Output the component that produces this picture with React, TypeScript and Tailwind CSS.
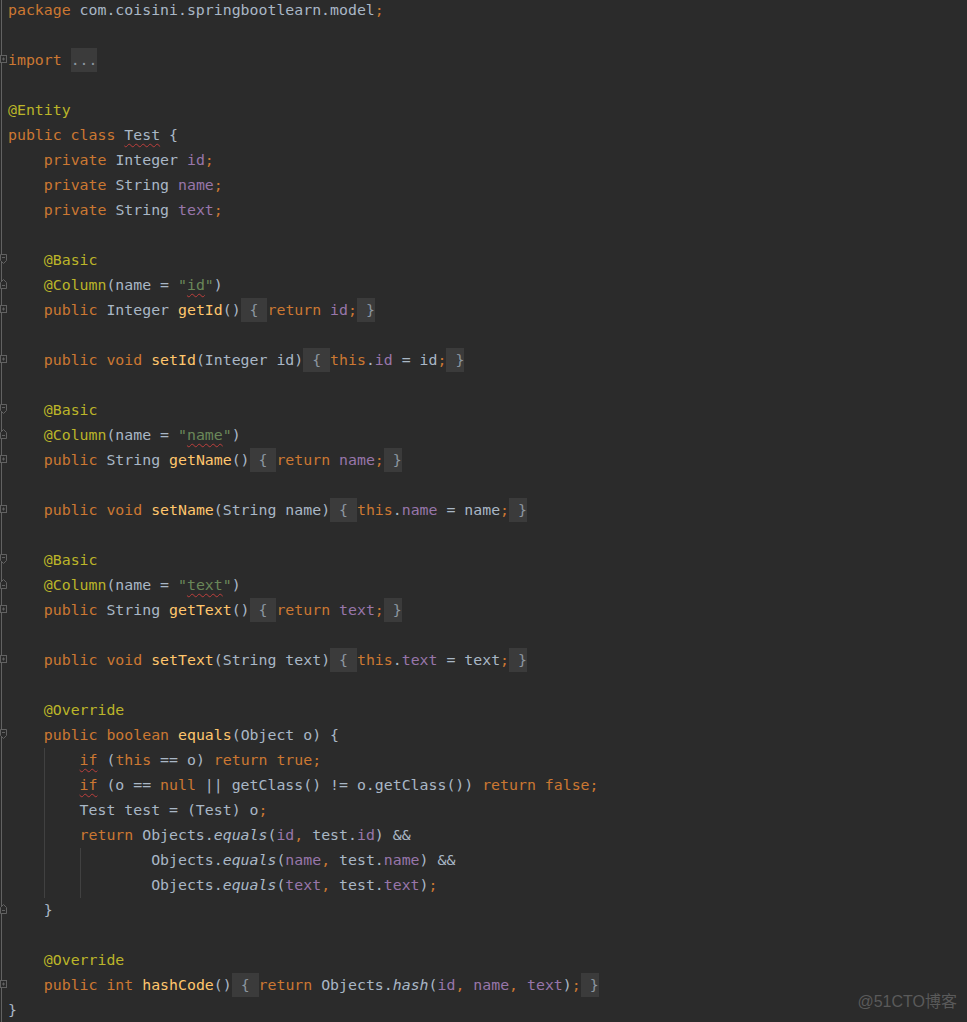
import React from 'react'

type Tok = [string, string]
type Row = { t: Tok[]; g?: 'start' | 'end' | 'plus'; guides?: boolean[] }

const cls: Record<string, string> = {
    k: 'text-[#cc7832]',
    p: 'text-[#a9b7c6]',
    f: 'text-[#9876aa]',
    a: 'text-[#bbb529]',
    s: 'text-[#6a8759]',
    m: 'text-[#ffc66d]',
    i: 'text-[#a9b7c6] italic',
    kw: 'text-[#cc7832] underline decoration-wavy decoration-[#bc3f3c] underline-offset-[3px] decoration-1',
    pw: 'text-[#a9b7c6] underline decoration-wavy decoration-[#bc3f3c] underline-offset-[3px] decoration-1',
    sw: 'text-[#6a8759] underline decoration-wavy decoration-[#bc3f3c] underline-offset-[3px] decoration-1',
    fb: 'inline-block bg-[#3b3b3b] text-[#8c96a0] leading-[24px]',
}

const ann = (name: string): Row => ({ t: [['p', '    '], ['a', name]] })
const col = (v: string, g: 'start' | 'end' = 'end'): Row => ({
    g,
    t: [['p', '    '], ['a', '@Column'], ['p', '(name = '], ['s', '"'], ['sw', v], ['s', '"'], ['p', ')']],
})
const getter = (type: string, name: string, field: string): Row => ({
    g: 'plus',
    t: [['p', '    '], ['k', 'public '], ['p', type + ' '], ['m', name], ['p', '()'], ['fb', ' { '], ['k', 'return '], ['f', field], ['k', ';'], ['fb', ' }']],
})
const setter = (type: string, name: string, field: string): Row => ({
    g: 'plus',
    t: [['p', '    '], ['k', 'public void '], ['m', name], ['p', `(${type} ${field})`], ['fb', ' { '], ['k', 'this'], ['p', '.'], ['f', field], ['p', ` = ${field}`], ['k', ';'], ['fb', ' }']],
})
const blank: Row = { t: [] }

const rows: Row[] = [
    { t: [['k', 'package'], ['p', ' com.coisini.springbootlearn.model'], ['k', ';']] },
    blank,
    { g: 'plus', t: [['k', 'import'], ['p', ' '], ['fb', '...']] },
    blank,
    { t: [['a', '@Entity']] },
    { t: [['k', 'public class '], ['pw', 'Test'], ['p', ' {']] },
    { t: [['p', '    '], ['k', 'private '], ['p', 'Integer '], ['f', 'id'], ['k', ';']] },
    { t: [['p', '    '], ['k', 'private '], ['p', 'String '], ['f', 'name'], ['k', ';']] },
    { t: [['p', '    '], ['k', 'private '], ['p', 'String '], ['f', 'text'], ['k', ';']] },
    blank,
    { ...ann('@Basic'), g: 'start' },
    col('id'),
    getter('Integer', 'getId', 'id'),
    blank,
    setter('Integer', 'setId', 'id'),
    blank,
    { ...ann('@Basic'), g: 'start' },
    col('name'),
    getter('String', 'getName', 'name'),
    blank,
    setter('String', 'setName', 'name'),
    blank,
    { ...ann('@Basic'), g: 'start' },
    col('text'),
    getter('String', 'getText', 'text'),
    blank,
    setter('String', 'setText', 'text'),
    blank,
    ann('@Override'),
    { g: 'start', t: [['p', '    '], ['k', 'public boolean '], ['m', 'equals'], ['p', '(Object o) {']] },
    { guides: [false, true], t: [['kw', 'if'], ['p', ' ('], ['k', 'this'], ['p', ' == o) '], ['k', 'return true;']] },
    { guides: [false, true], t: [['kw', 'if'], ['p', ' (o == '], ['k', 'null'], ['p', ' || getClass() != o.getClass()) '], ['k', 'return false;']] },
    { guides: [false, true], t: [['p', 'Test test = (Test) o'], ['k', ';']] },
    { guides: [false, true], t: [['k', 'return '], ['p', 'Objects.'], ['i', 'equals'], ['p', '('], ['f', 'id'], ['k', ', '], ['p', 'test.'], ['f', 'id'], ['p', ') &&']] },
    { guides: [false, true, true, false], t: [['p', 'Objects.'], ['i', 'equals'], ['p', '('], ['f', 'name'], ['k', ', '], ['p', 'test.'], ['f', 'name'], ['p', ') &&']] },
    { guides: [false, true, true, false], t: [['p', 'Objects.'], ['i', 'equals'], ['p', '('], ['f', 'text'], ['k', ', '], ['p', 'test.'], ['f', 'text'], ['p', ')'], ['k', ';']] },
    { g: 'end', t: [['p', '    }']] },
    blank,
    ann('@Override'),
    {
        g: 'plus',
        t: [['p', '    '], ['k', 'public int '], ['m', 'hashCode'], ['p', '()'], ['fb', ' { '], ['k', 'return '], ['p', 'Objects.'], ['i', 'hash'], ['p', '('], ['f', 'id'], ['k', ', '], ['f', 'name'], ['k', ', '], ['f', 'text'], ['p', ')'], ['k', ';'], ['fb', ' }']],
    },
    { t: [['p', '}']] },
]

const Gutter = ({ g }: { g?: Row['g'] }) => (
    <svg width="8" height="25" className="shrink-0" fill="none" stroke="#626262" strokeWidth="1">
        <line x1="1.5" y1="0" x2="1.5" y2="25" />
        {g === 'start' && (
            <>
                <path d="M0.5 6.5H6.5V12.5L3.5 15.5L0.5 12.5Z" fill="#2b2b2b" />
                <path d="M2 9.5H5" />
            </>
        )}
        {g === 'end' && (
            <>
                <path d="M0.5 15.5H6.5V9.5L3.5 6.5L0.5 9.5Z" fill="#2b2b2b" />
                <path d="M2 12.5H5" />
            </>
        )}
        {g === 'plus' && (
            <>
                <rect x="0.5" y="7.5" width="6" height="7" fill="#2b2b2b" />
                <path d="M2 11H5M3.5 9.5V12.5" />
            </>
        )}
    </svg>
)

export default function App() {
    return (
        <div className="relative w-[967px] h-[1022px] overflow-hidden bg-[#2b2b2b] font-['DejaVu_Sans_Mono',monospace] text-[14.87px]">
            <div className="flex flex-col -mt-[2px]">
                {rows.map((r, n) => (
                    <div key={n} className="flex h-[25px]">
                        <Gutter g={r.g} />
                        {r.guides?.map((on, j) => (
                            <div key={j} className={on ? 'w-[4ch] shrink-0 border-l border-[#414141]' : 'w-[4ch] shrink-0'} />
                        ))}
                        <span className="whitespace-pre leading-[25px]">
                            {r.t.map(([c, s], j) => (
                                <span key={j} className={cls[c]}>{s}</span>
                            ))}
                        </span>
                    </div>
                ))}
            </div>
            <div className="absolute right-[10px] bottom-[12px] text-[16px] leading-none text-[#5a5a5a] font-['Liberation_Sans','Noto_Sans_CJK_SC',sans-serif]">
                @51CTO博客
            </div>
        </div>
    )
}
